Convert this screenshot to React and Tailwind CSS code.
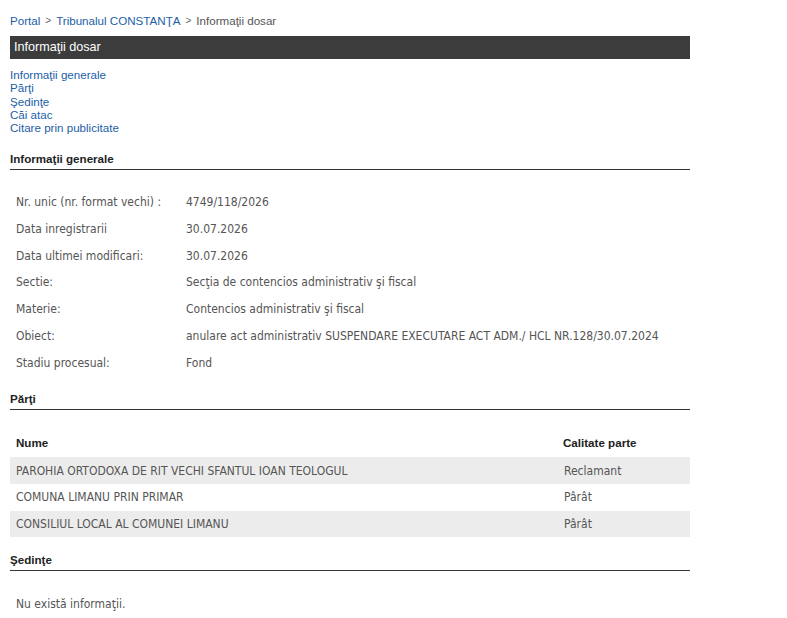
const general = [
  ["Nr. unic (nr. format vechi) :", "4749/118/2026"],
  ["Data inregistrarii", "30.07.2026"],
  ["Data ultimei modificari:", "30.07.2026"],
  ["Sectie:", "Secţia de contencios administrativ şi fiscal"],
  ["Materie:", "Contencios administrativ şi fiscal"],
  ["Obiect:", "anulare act administrativ SUSPENDARE EXECUTARE ACT ADM./ HCL NR.128/30.07.2024"],
  ["Stadiu procesual:", "Fond"],
];

const parti = [
  ["PAROHIA ORTODOXA DE RIT VECHI SFANTUL IOAN TEOLOGUL", "Reclamant"],
  ["COMUNA LIMANU PRIN PRIMAR", "Pârât"],
  ["CONSILIUL LOCAL AL COMUNEI LIMANU", "Pârât"],
];

const arial = "font-['Liberation_Sans',Arial,sans-serif]";
const tahoma = "font-['DejaVu_Sans_Condensed','DejaVu_Sans',Tahoma,sans-serif] [font-stretch:condensed]";

function SectionTitle({ children }) {
  return (
    <div className={`${arial} text-[11.6px] font-bold text-[#222] border-b border-[#333] pb-[3px] leading-[14px]`}>
      {children}
    </div>
  );
}

export default function App() {
  return (
    <div className="bg-white min-h-screen pl-[10px] pt-[14px] w-[690px]">
      {/* breadcrumb */}
      <div className={`${arial} text-[11.6px] leading-[14px] text-[#555] flex items-center`}>
        <a className="text-[#1c5ea8]">Portal</a>
        <span className="mx-[5px] text-[10px] text-[#666]">&gt;</span>
        <a className="text-[#1c5ea8]">Tribunalul CONSTANŢA</a>
        <span className="mx-[5px] text-[10px] text-[#666]">&gt;</span>
        <span>Informaţii dosar</span>
      </div>

      <div className={`${arial} mt-[8px] h-[23px] bg-[#3c3c3c] text-white text-[12.6px] flex items-center px-[4px]`}>
        Informaţii dosar
      </div>

      <ul className={`${arial} mt-[9px] text-[11.6px] leading-[13.3px] text-[#1c5ea8]`}>
        <li>Informaţii generale</li>
        <li>Părţi</li>
        <li>Şedinţe</li>
        <li>Căi atac</li>
        <li>Citare prin publicitate</li>
      </ul>

      <div className="mt-[18px]">
        <SectionTitle>Informaţii generale</SectionTitle>
      </div>

      <div className={`${tahoma} mt-[18px] text-[12px] text-[#555]`}>
        {general.map(([label, value]) => (
          <div key={label} className="flex h-[26.85px] items-center">
            <div className="w-[176px] pl-[6px]">{label}</div>
            <div>{value}</div>
          </div>
        ))}
      </div>

      <div className="mt-[16px]">
        <SectionTitle>Părţi</SectionTitle>
      </div>

      <div className="mt-[17px]">
        <div className={`${arial} flex h-[30px] items-center text-[11.6px] font-bold text-[#222]`}>
          <div className="flex-1 pl-[6px]">Nume</div>
          <div className="w-[127px]">Calitate parte</div>
        </div>
        {parti.map(([nume, calitate], i) => (
          <div
            key={nume}
            className={`${tahoma} flex h-[26.7px] items-center text-[12px] text-[#555] ${i % 2 === 0 ? "bg-[#ececec]" : "bg-white"}`}
          >
            <div className="flex-1 pl-[6px]">{nume}</div>
            <div className="w-[126px]">{calitate}</div>
          </div>
        ))}
      </div>

      <div className="mt-[16px]">
        <SectionTitle>Şedinţe</SectionTitle>
      </div>

      <div className={`${tahoma} mt-[24px] pl-[6px] text-[12px] text-[#555]`}>
        Nu există informaţii.
      </div>
    </div>
  );
}
